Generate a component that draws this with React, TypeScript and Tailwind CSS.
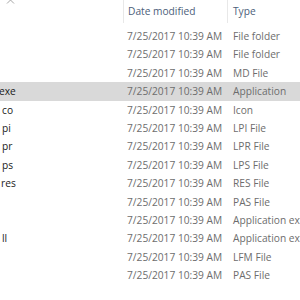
import React from "react";

interface Row {
  name: string;
  nameX: number;
  type: string;
  selected?: boolean;
}

const rows: Row[] = [
  { name: "", nameX: 0, type: "File folder" },
  { name: "", nameX: 0, type: "File folder" },
  { name: "", nameX: 0, type: "MD File" },
  { name: "exe", nameX: -1, type: "Application", selected: true },
  { name: "co", nameX: 2, type: "Icon" },
  { name: "pi", nameX: 2, type: "LPI File" },
  { name: "pr", nameX: 2, type: "LPR File" },
  { name: "ps", nameX: 2, type: "LPS File" },
  { name: "res", nameX: 1, type: "RES File" },
  { name: "", nameX: 0, type: "PAS File" },
  { name: "", nameX: 0, type: "Application extension" },
  { name: "ll", nameX: 2, type: "Application extension" },
  { name: "", nameX: 0, type: "LFM File" },
  { name: "", nameX: 0, type: "PAS File" },
];

export default function App() {
  return (
    <div
      className="w-[300px] h-[300px] overflow-hidden bg-white text-[10.2px] leading-none"
      style={{ fontFamily: '"Open Sans", "Noto Sans", sans-serif' }}
    >
      {/* column headers */}
      <div className="flex h-[27px] text-[#4c607a]">
        <div className="w-[123px] shrink-0 h-[23px] relative">
          <svg
            className="absolute left-[6px] top-0"
            width="9"
            height="5"
            viewBox="0 0 9 5"
          >
            <polyline points="1,3.5 4.5,0 8,3.5" fill="none" stroke="#a6a6a6" strokeWidth="1" />
          </svg>
        </div>
        <div className="w-[104px] shrink-0 h-[23px] border-l border-[#e8e8e8] pl-[4px] flex items-center">
          Date modified
        </div>
        <div className="flex-1 h-[23px] border-l border-[#e8e8e8] pl-[5px] flex items-center">
          Type
        </div>
      </div>

      {rows.map((row, i) => (
        <div
          key={i}
          className={`flex items-center h-[18.4px] whitespace-nowrap ${
            row.selected ? "bg-[#d9d9d9]" : ""
          }`}
        >
          <div className="w-[127px] shrink-0 text-[#1a1a1a]">
            <span style={{ marginLeft: row.nameX }}>{row.name}</span>
          </div>
          <div className="w-[106px] shrink-0 text-[#6d6d6d]">7/25/2017 10:39 AM</div>
          <div className="flex-1 text-[#6d6d6d]">{row.type}</div>
        </div>
      ))}
    </div>
  );
}
